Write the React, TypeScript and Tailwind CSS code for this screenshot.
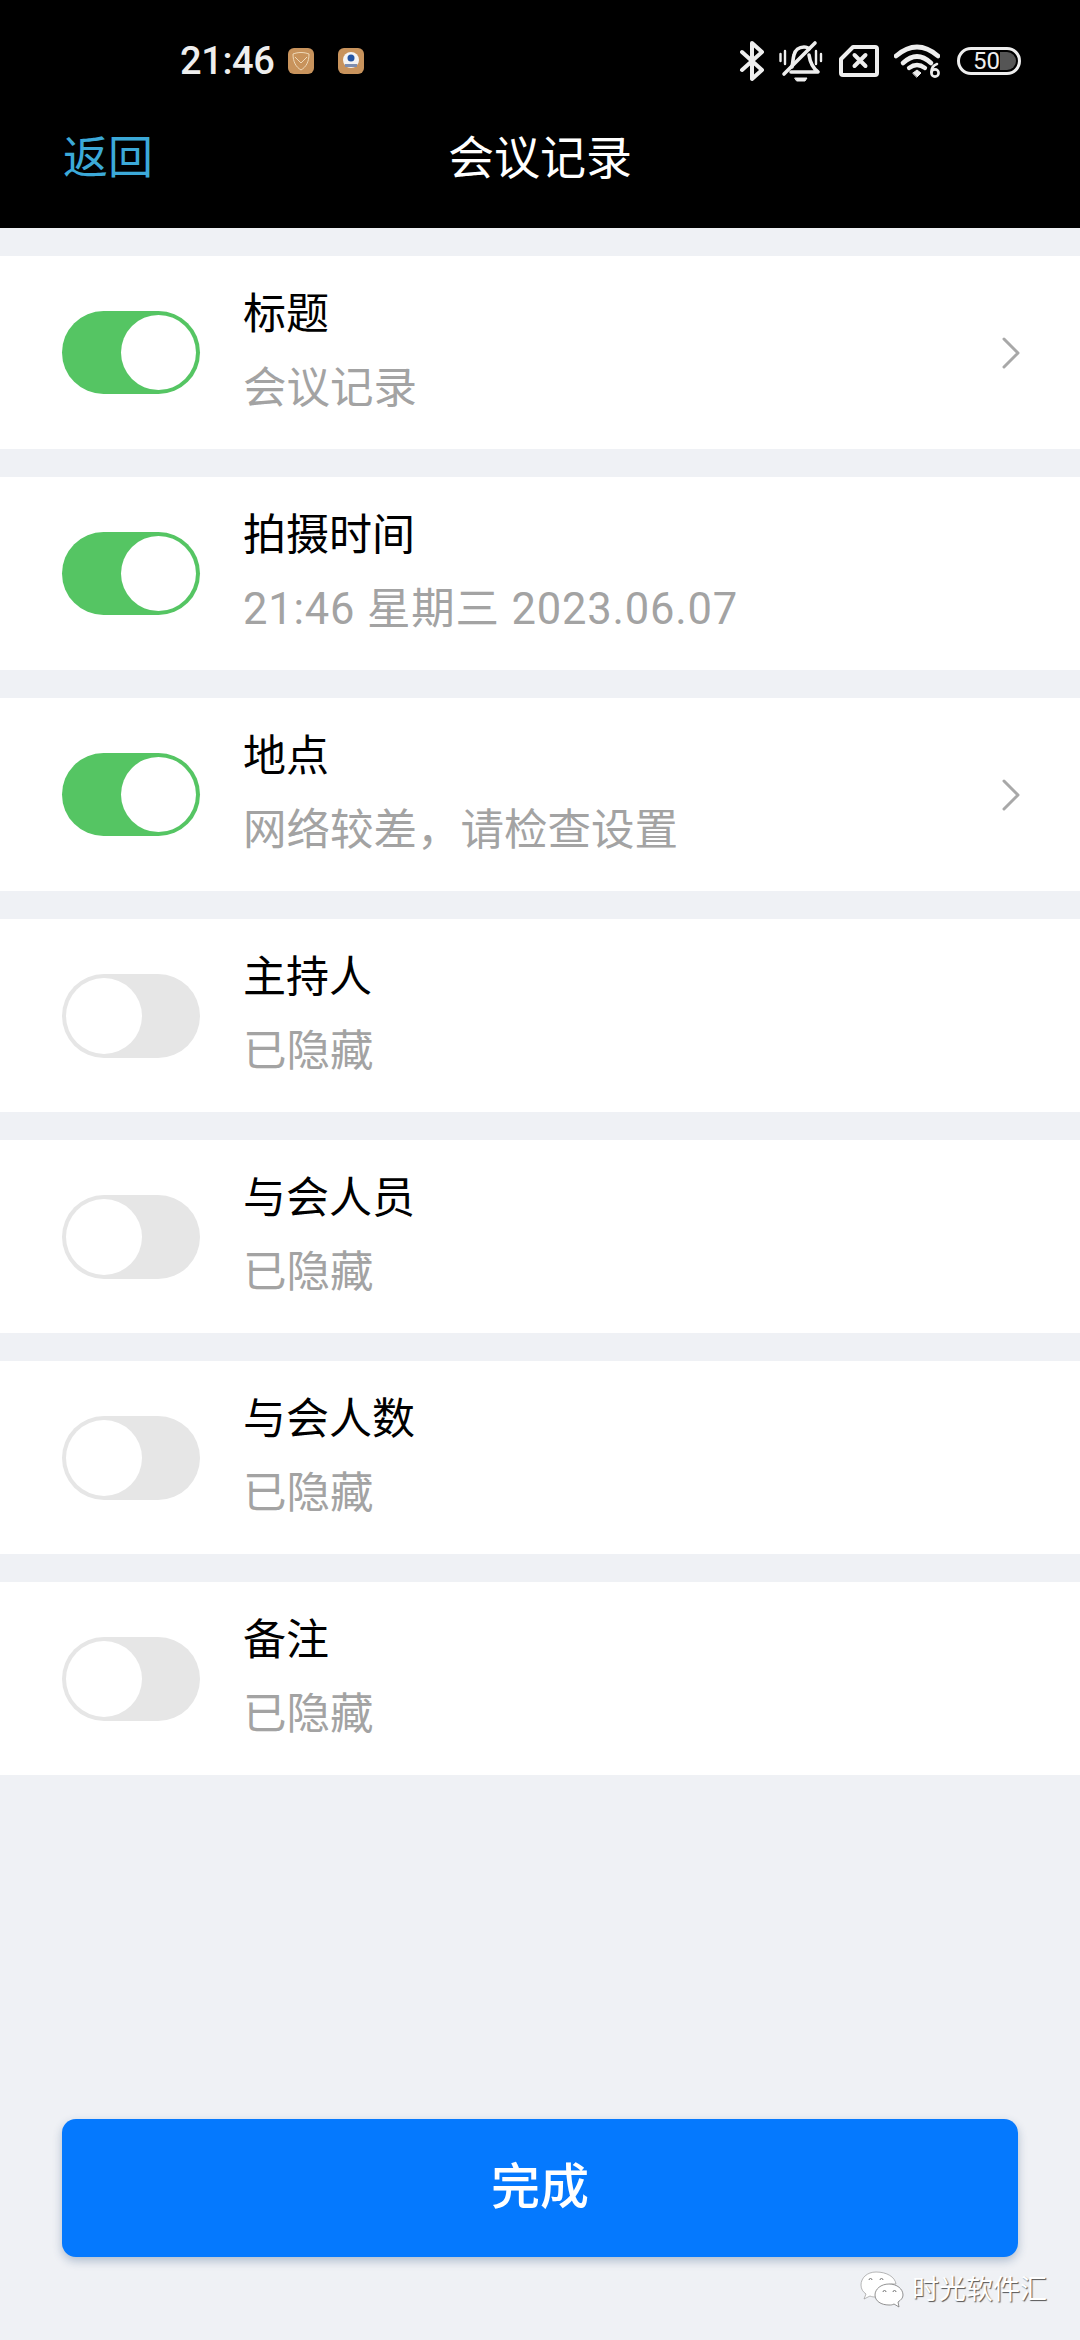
import React from "react";

const fontStack = "font-['Roboto','Noto_Sans_CJK_SC',sans-serif]";

const rows = [
  { title: "标题", sub: "会议记录", on: true, arrow: true, subClass: "" },
  { title: "拍摄时间", sub: "21:46 星期三 2023.06.07", on: true, arrow: false, subClass: "tracking-[0.8px]" },
  { title: "地点", sub: "网络较差，请检查设置", on: true, arrow: true, subClass: "" },
  { title: "主持人", sub: "已隐藏", on: false, arrow: false, subClass: "" },
  { title: "与会人员", sub: "已隐藏", on: false, arrow: false, subClass: "" },
  { title: "与会人数", sub: "已隐藏", on: false, arrow: false, subClass: "" },
  { title: "备注", sub: "已隐藏", on: false, arrow: false, subClass: "" },
];

function Toggle({ on }: { on: boolean }) {
  if (on) {
    return (
      <div className="flex h-[83px] w-[138px] shrink-0 items-center justify-end rounded-full bg-[#55c563] pr-[4px]">
        <div className="h-[75px] w-[75px] rounded-full bg-white" />
      </div>
    );
  }
  return (
    <div className="flex h-[84px] w-[138px] shrink-0 items-center rounded-full bg-[#e6e6e6] pl-[4px]">
      <div className="h-[76px] w-[76px] rounded-full bg-white" />
    </div>
  );
}

function Row({ title, sub, on, arrow, subClass }: { title: string; sub: string; on: boolean; arrow: boolean; subClass: string }) {
  return (
    <div className="flex h-[193px] items-center bg-white pl-[62px] pr-[60px]">
      <Toggle on={on} />
      <div className="ml-[43px] flex-1 pb-[3px]">
        <p className="h-[74px] text-[43px] leading-[73px] text-black">{title}</p>
        <p className={`h-[73px] text-[43.5px] leading-[73px] text-[#a3a3a3] ${subClass}`}>{sub}</p>
      </div>
      {arrow && (
        <svg width="18" height="32" viewBox="0 0 18 32" fill="none" stroke="#a8a8a8" strokeWidth="3" strokeLinecap="round" strokeLinejoin="round">
          <path d="M2 2l14 14L2 30" />
        </svg>
      )}
    </div>
  );
}

function StatusIcons() {
  return (
    <div className="flex items-center text-[#eeeeee]">
      <svg width="26" height="42" viewBox="0 0 26 42" fill="none" stroke="currentColor" strokeWidth="4" strokeLinecap="round" strokeLinejoin="round">
        <path d="M3 12l20 18-10 9V3l10 9L3 30" />
      </svg>
      <svg className="ml-[14px]" width="44" height="42" viewBox="0 0 44 42" fill="none" stroke="currentColor" strokeWidth="3.6" strokeLinecap="round" strokeLinejoin="round">
        <path d="M1.500 14v7M6 11v13M37 11v13M42 14v7" strokeWidth="2.4" />
        <path d="M13 27c1-5 1-9 2-12 1-5 5-8 10-8 2 0 4 .6 5 2M30 15c1 7 4 13 9 17H12" />
        <path d="M36 3L5 34" />
        <path d="M16 38h12l-2 3h-8z" fill="currentColor" strokeWidth="1" />
      </svg>
      <svg className="ml-[16px]" width="40" height="32" viewBox="0 0 40 32" fill="none" stroke="currentColor" strokeLinecap="round" strokeLinejoin="round">
        <path d="M14 2h22a2 2 0 0 1 2 2v24a2 2 0 0 1-2 2H4a2 2 0 0 1-2-2V14z" strokeWidth="4" />
        <path d="M15.500 10l11 11M26.500 10l-11 11" strokeWidth="4" />
      </svg>
      <svg className="ml-[15px]" width="46" height="36" viewBox="0 0 46 36" fill="none" stroke="currentColor" strokeLinecap="round">
        <path d="M2 13Q23-5 44 13" strokeWidth="4.600" />
        <path d="M9 20Q23 7 37 20" strokeWidth="4.600" />
        <path d="M15 25Q23 19 31 25" strokeWidth="4.200" />
        <path d="M19 30l4-3 4 3-4 4z" fill="currentColor" strokeWidth="1" />
        <circle cx="41" cy="30" r="3.600" strokeWidth="2.600" />
        <path d="M43 21c-3 1-5.500 4-5.500 8" strokeWidth="2.600" />
      </svg>
      <div className="relative ml-[17px] flex h-[28px] w-[64px] items-center overflow-hidden rounded-full border-[3px] border-[#eeeeee]">
        <div className="absolute inset-y-[2px] left-[40px] right-[2px] rounded-r-full bg-[#555555]" />
        <span className="relative ml-[13px] text-[24px] leading-none text-[#eeeeee]">50</span>
      </div>
    </div>
  );
}

function NotifyIcons() {
  return (
    <div className="ml-[14px] flex items-center gap-[24px]">
      <div className="flex h-[26px] w-[26px] items-center justify-center rounded-[6px] bg-[#c8935c]">
        <svg width="18" height="20" viewBox="0 0 18 20" fill="none" stroke="#efd9b8" strokeWidth="1">
          <path d="M1 3c5-2 11-2 16 0 0 8-3 13-8 16C4 16 1 11 1 3zM3 6l6 6 6-6" />
        </svg>
      </div>
      <div className="flex h-[26px] w-[26px] items-center justify-center rounded-[6px] bg-[#c8935c]">
        <svg width="18" height="20" viewBox="0 0 18 20">
          <circle cx="9" cy="9" r="8" fill="#f4f4f4" />
          <circle cx="9" cy="7" r="3.500" fill="#2355a5" />
          <rect x="3" y="13" width="12" height="3" fill="#7f8fb0" />
        </svg>
      </div>
    </div>
  );
}

function WatermarkIcon() {
  return (
    <svg width="44" height="38" viewBox="0 0 44 38">
      <path d="M16 1C7 1 1 7 1 14c0 4 2 7 5 9l-2 5 6-3c2 1 4 1 6 1h3c-1-8 6-14 17-13C35 6 27 1 16 1z" fill="#ffffff" stroke="#9a9a9a" strokeWidth="0.7" />
      <path d="M29 13c-8 0-14 5-14 11s6 10 14 10c2 0 3 0 5-1l5 3-1-5c3-2 5-4 5-7 0-6-6-11-14-11z" fill="#ffffff" stroke="#777777" strokeWidth="0.8" />
      <path d="M23 21a1.500 1.500 0 0 1 3 0M33 21a1.500 1.500 0 0 1 3 0M9 9a1.500 1.500 0 0 1 3 0M20 9a1.500 1.500 0 0 1 3 0" fill="none" stroke="#777777" strokeWidth="1" />
    </svg>
  );
}

export default function App() {
  return (
    <div className={`relative flex h-[2340px] w-[1080px] flex-col overflow-hidden bg-[#eff1f5] ${fontStack}`}>
      <header className="h-[228px] shrink-0 bg-black">
        <div className="flex h-[122px] items-center justify-between pl-[180px] pr-[59px]">
          <div className="flex items-center">
            <span className="text-[38px] font-medium leading-none tracking-[-0.4px] text-[#eeeeee]">21:46</span>
            <NotifyIcons />
          </div>
          <StatusIcons />
        </div>
        <div className="relative flex h-[72px] items-center justify-center">
          <span className="absolute left-[63px] text-[45px] leading-none text-[#3ca9d8]">返回</span>
          <span className="text-[46px] leading-none text-white">会议记录</span>
        </div>
      </header>

      <main className="mt-[28px] flex flex-col gap-[28px]">
        {rows.map((row) => (
          <Row key={row.title} {...row} />
        ))}
      </main>

      <div className="mt-auto px-[62px] pb-[83px]">
        <button className="flex h-[138px] w-full items-center justify-center rounded-[14px] bg-[#0579fe] text-[49px] font-medium text-white shadow-[0_4px_10px_rgba(30,70,120,0.3)]">
          完成
        </button>
      </div>

      <div className="absolute left-[860px] top-[2271px] flex items-center gap-[8px]">
        <WatermarkIcon />
        <span className="text-[27px] leading-none text-white [text-shadow:1px_1px_1px_#555]">时光软件汇</span>
      </div>
    </div>
  );
}
